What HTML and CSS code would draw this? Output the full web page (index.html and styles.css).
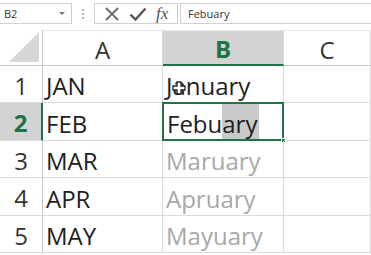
FILE: index.html
```
<!DOCTYPE html>
<html lang="en">
<head>
  <meta charset="UTF-8">
  <title>Flash Fill</title>
  <link rel="stylesheet" href="styles.css">
</head>
<body>
  <div class="toolbar">
    <div class="name-box">
      <span>B2</span>
      <span class="arrow"></span>
    </div>
    <div class="grip"><i></i><i></i><i></i></div>
    <div class="fx-buttons">
      <svg class="icon" width="16" height="16" viewBox="0 0 16 16"><path d="M2 2 L14 14 M14 2 L2 14" stroke="#6b6b6b" stroke-width="1.8" fill="none"/></svg>
      <svg class="icon" width="18" height="16" viewBox="0 0 18 16"><path d="M1.5 8.5 L6.5 13.5 L16.5 2.5" stroke="#555" stroke-width="2.4" fill="none"/></svg>
      <span class="fx">fx</span>
    </div>
    <div class="formula">Febuary</div>
  </div>

  <div class="sheet">
    <div class="corner"><span class="tri"></span></div>
    <div class="col-head">A</div>
    <div class="col-head active">B</div>
    <div class="col-head">C</div>

    <div class="row-head">1</div>
    <div class="cell">JAN</div>
    <div class="cell">January</div>
    <div class="cell"></div>

    <div class="row-head active">2</div>
    <div class="cell">FEB</div>
    <div class="cell selected">Febu<span class="sel">ary</span><span class="handle"></span></div>
    <div class="cell"></div>

    <div class="row-head">3</div>
    <div class="cell">MAR</div>
    <div class="cell hint">Maruary</div>
    <div class="cell"></div>

    <div class="row-head">4</div>
    <div class="cell">APR</div>
    <div class="cell hint">Apruary</div>
    <div class="cell"></div>

    <div class="row-head">5</div>
    <div class="cell">MAY</div>
    <div class="cell hint">Mayuary</div>
    <div class="cell"></div>

    <svg class="cursor" width="14" height="14" viewBox="0 0 14 14"><path d="M5 1 H9 V5 H13 V9 H9 V13 H5 V9 H1 V5 H5 Z" fill="#fff" stroke="#222" stroke-width="1.3"/></svg>
  </div>
</body>
</html>
```

FILE: styles.css
```
* {
  margin: 0;
  padding: 0;
  box-sizing: border-box;
}

body {
  width: 371px;
  height: 255px;
  overflow: hidden;
  background: #fff;
  font-family: 'Open Sans', 'Noto Sans', sans-serif;
  color: #222;
}

.toolbar {
  height: 30px;
  display: flex;
  align-items: flex-start;
  padding-top: 3px;
}

.name-box {
  width: 73px;
  height: 21px;
  margin-left: -1px;
  border: 1px solid #d0d0d0;
  display: flex;
  align-items: center;
  justify-content: space-between;
  padding: 0 6px 0 4px;
  font-size: 11px;
  color: #333;
}

.arrow {
  width: 0;
  height: 0;
  border-left: 3px solid transparent;
  border-right: 3px solid transparent;
  border-top: 3px solid #777;
}

.grip {
  width: 22px;
  height: 21px;
  display: flex;
  flex-direction: column;
  align-items: center;
  justify-content: center;
  gap: 2px;
}

.grip i {
  width: 2px;
  height: 2px;
  background: #b5b5b5;
}

.fx-buttons {
  width: 84px;
  height: 21px;
  border: 1px solid #d0d0d0;
  display: flex;
  align-items: center;
  justify-content: space-around;
  padding: 0 4px;
}

.fx {
  font-family: 'Liberation Serif', serif;
  font-style: italic;
  font-size: 17px;
  color: #555;
  line-height: 1;
}

.formula {
  flex: 1;
  height: 21px;
  margin-left: 2px;
  border: 1px solid #d0d0d0;
  border-right: none;
  font-size: 11px;
  line-height: 19px;
  padding-left: 7px;
  color: #333;
}

.sheet {
  position: relative;
  display: grid;
  grid-template-columns: 43px 120px 121px 1fr;
  grid-template-rows: 36px 37px 38px 37px 38px 37px;
}

.corner {
  border-bottom: 1px solid #c6c6c6;
  border-right: 1px solid #c6c6c6;
  display: flex;
  align-items: flex-end;
  justify-content: flex-end;
  padding: 0 3px 3px 0;
}

.tri {
  width: 0;
  height: 0;
  border-left: 30px solid transparent;
  border-bottom: 30px solid #d6d6d6;
}

.col-head {
  border-bottom: 1px solid #c6c6c6;
  border-right: 1px solid #dadada;
  border-top: 1px solid #e6e6e6;
  display: flex;
  align-items: center;
  justify-content: center;
  font-size: 24px;
  color: #333;
  padding-top: 2px;
}

.col-head.active {
  background: #d3d3d3;
  border-bottom: 2px solid #217346;
  color: #217346;
  font-weight: 700;
}

.row-head {
  border-bottom: 1px solid #dadada;
  border-right: 1px solid #c6c6c6;
  display: flex;
  align-items: center;
  justify-content: center;
  font-size: 24px;
  color: #333;
  padding-top: 2px;
}

.row-head.active {
  background: #d3d3d3;
  border-right: 2px solid #217346;
  color: #217346;
  font-weight: 700;
}

.cell {
  position: relative;
  border-bottom: 1px solid #dadada;
  border-right: 1px solid #dadada;
  display: flex;
  align-items: center;
  padding: 3px 0 0 3px;
  font-size: 24px;
  color: #1e1e1e;
  white-space: nowrap;
}

.cell.hint {
  color: #a8a8a8;
}

.cell.selected {
  border: 2px solid #217346;
  margin: -1px 0 0 -1px;
  padding-left: 3px;
}

.sel {
  background: #c9c9c9;
  align-self: stretch;
  display: flex;
  align-items: center;
  margin-top: -3px;
  padding-top: 3px;
  padding-right: 2px;
}

.handle {
  position: absolute;
  right: -4px;
  bottom: -4px;
  width: 5px;
  height: 5px;
  background: #217346;
  border: 1px solid #fff;
}

.cursor {
  position: absolute;
  left: 172px;
  top: 51px;
}
```
